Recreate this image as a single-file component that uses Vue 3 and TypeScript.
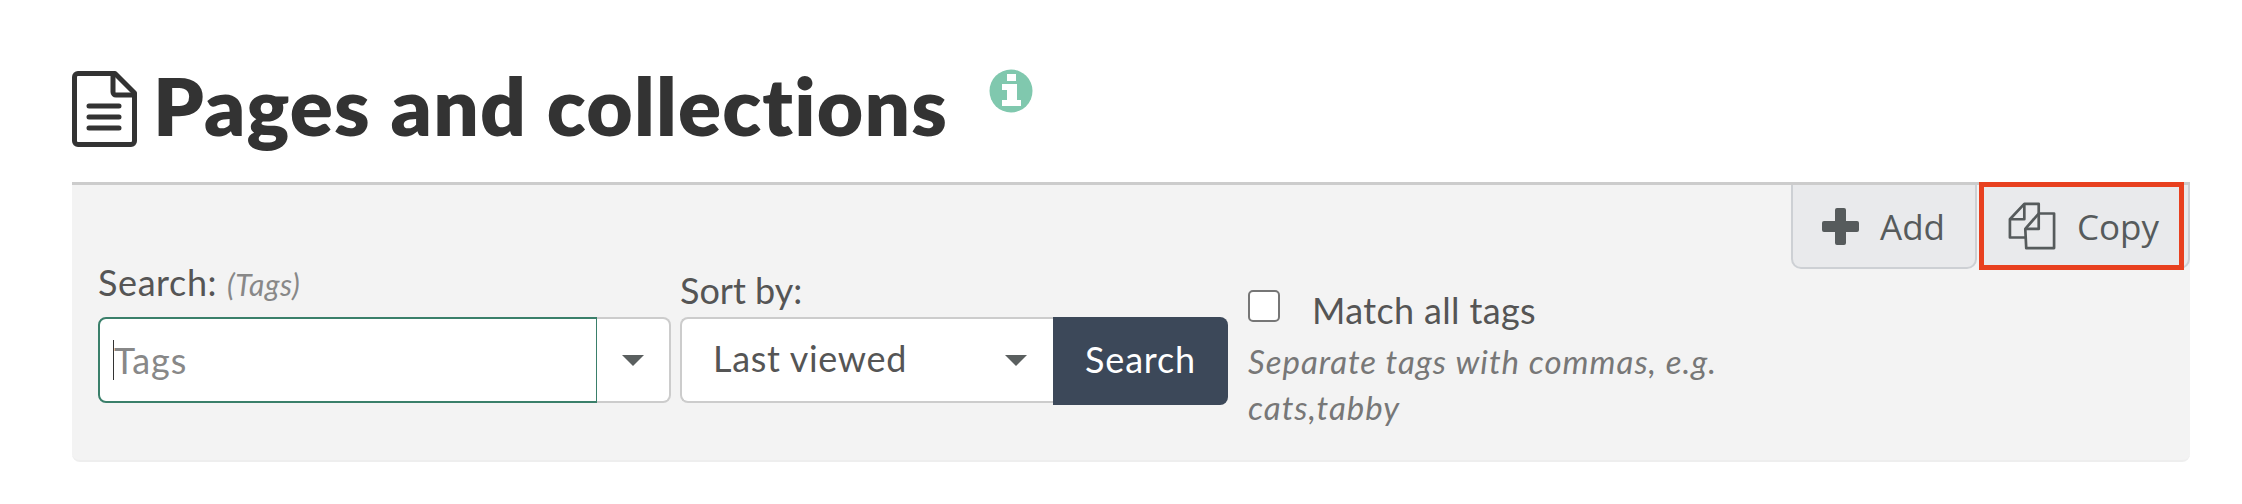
<script setup lang="ts">
const title = 'Pages and collections'
</script>

<template>
  <div class="page">
    <div class="heading">
      <svg class="doc" viewBox="0 0 65 76" fill="none" stroke="#333" stroke-width="5" stroke-linejoin="round" stroke-linecap="round">
        <path d="M6 2.5H43L62.5 22V70a3.5 3.5 0 0 1-3.5 3.5H6A3.5 3.5 0 0 1 2.5 70V6A3.5 3.5 0 0 1 6 2.5Z" />
        <path d="M41 3V21a3 3 0 0 0 3 3H62" />
        <path d="M17 35H47M17 46H47M17 57H47" />
      </svg>
      <h1>{{ title }}</h1>
      <svg class="info" viewBox="0 0 44 44">
        <circle cx="22" cy="22" r="21.5" fill="#80c8ae" />
        <path fill="#fff" d="M18 5h9v7h-9zM13 15h15v16h4v6H13v-6h5V21h-5z" />
      </svg>
    </div>
    <section class="panel">
      <div class="tabs">
        <button class="tab add">
          <svg class="plus" viewBox="0 0 37 37"><path fill="#565b5c" d="M13 2a2 2 0 0 1 2-2h7a2 2 0 0 1 2 2v11h11a2 2 0 0 1 2 2v7a2 2 0 0 1-2 2H24v11a2 2 0 0 1-2 2h-7a2 2 0 0 1-2-2V24H2a2 2 0 0 1-2-2v-7a2 2 0 0 1 2-2h11z" /></svg>
          <span>Add</span>
        </button>
        <button class="tab copy">
          <svg class="copyicon" viewBox="-1 -1 50 50" fill="none" stroke="#565b5c" stroke-width="2.8" stroke-linejoin="round">
            <path d="M17 36H1V17L16 1H31V11" />
            <path d="M16 1V17H1" />
            <path d="M17 27L31 11H47V47H18Z" />
            <path d="M31 11V27H17" />
          </svg>
          <span>Copy</span>
          <i class="highlight"></i>
        </button>
      </div>
      <div class="form">
        <div class="col search-col">
          <label class="lab">Search: <em>(Tags)</em></label>
          <div class="combo">
            <div class="tagsinput"><i class="caret"></i><span class="placeholder">Tags</span></div>
            <div class="drop"><i class="arrow"></i></div>
          </div>
        </div>
        <div class="col sort-col">
          <label class="lab sort-lab">Sort by:</label>
          <div class="sortgroup">
            <div class="select"><span>Last viewed</span><i class="arrow"></i></div>
            <button class="go">Search</button>
          </div>
        </div>
        <div class="col match">
          <div class="checkrow">
            <i class="box"></i>
            <span>Match all tags</span>
          </div>
          <p class="help">Separate tags with commas, e.g. cats,tabby</p>
        </div>
      </div>
    </section>
  </div>
</template>

<style>
html, body { margin: 0; background: #fff; }
</style>

<style scoped>
.page {
  width: 2242px;
  height: 504px;
  box-sizing: border-box;
  padding: 71px 52px 0 72px;
  font-family: Lato, "Liberation Sans", sans-serif;
  color: #555;
  overflow: hidden;
}
.heading { display: flex; align-items: flex-start; height: 111px; }
.doc { width: 65px; height: 76px; flex: none; }
h1 {
  margin: -6px 0 0 16px;
  font-size: 80px;
  line-height: 80px;
  font-weight: 800;
  color: #333;
  white-space: nowrap;
  letter-spacing: 1.2px;
}
.info { width: 44px; height: 44px; flex: none; margin: -2px 0 0 41px; }
.panel {
  height: 280px;
  box-sizing: border-box;
  background: #f3f3f3;
  border-top: 3px solid #ccc;
  border-bottom: 2px solid #eee;
  border-radius: 0 0 8px 8px;
}
.tabs { display: flex; justify-content: flex-end; gap: 2px; height: 84px; }
.tab {
  position: relative;
  display: flex;
  align-items: center;
  box-sizing: border-box;
  height: 84px;
  padding: 0;
  background: #e9eaec;
  border: 2px solid #cdd0d4;
  border-top: none;
  border-radius: 0 0 10px 10px;
  font-family: "Open Sans", sans-serif;
  font-size: 35px;
  color: #565b5c;
}
.add { width: 186px; padding-left: 29px; gap: 21px; }
.copy { width: 211px; padding-left: 27px; gap: 21px; border-radius: 0 0 10px 0; }
.plus { width: 37px; height: 37px; }
.copyicon { width: 48px; height: 48px; }
.highlight {
  position: absolute;
  left: -2px;
  right: 4px;
  top: -3px;
  bottom: -3px;
  border: 5px solid #e8401f;
}
.form { display: flex; align-items: flex-start; padding-left: 26px; margin-top: -5px; }
.col { display: flex; flex-direction: column; }
.lab { font-size: 36px; line-height: 36px; height: 53px; color: #555; letter-spacing: 0.6px; }
.lab em { font-size: 30px; color: #888; }
.search-col { width: 573px; margin-right: 9px; }
.sort-lab { padding-top: 8px; box-sizing: border-box; letter-spacing: 0; }
.sort-col { width: 548px; margin-right: 20px; }
.combo { display: flex; height: 86px; width: 573px; }
.tagsinput {
  display: flex;
  align-items: center;
  box-sizing: border-box;
  width: 499px;
  padding-left: 13px;
  background: #fff;
  border: 2px solid #3a7f6a;
  border-right-width: 1px;
  border-radius: 8px 0 0 8px;
}
.caret { width: 1px; height: 40px; background: #333; }
.placeholder { font-size: 36px; color: #888; letter-spacing: 1px; }
.drop {
  flex: 1;
  display: flex;
  align-items: center;
  justify-content: center;
  background: #fff;
  border: 2px solid #ccc;
  border-left: none;
  border-radius: 0 8px 8px 0;
}
.arrow {
  width: 0;
  height: 0;
  border-left: 11px solid transparent;
  border-right: 11px solid transparent;
  border-top: 11px solid #5a5f5f;
}
.sortgroup { display: flex; height: 86px; }
.select {
  flex: none;
  width: 373px;
  box-sizing: border-box;
  display: flex;
  align-items: center;
  justify-content: space-between;
  padding: 0 26px 0 31px;
  background: #fff;
  border: 2px solid #ccc;
  border-right: none;
  border-radius: 8px 0 0 8px;
  font-size: 36px;
  letter-spacing: 0.7px;
  color: #555;
}
.select span { margin-top: -5px; }
.go {
  flex: none;
  width: 175px;
  height: 88px;
  padding: 0 0 4px;
  background: #3c4859;
  border: none;
  border-radius: 0 8px 8px 0;
  color: #fff;
  font-family: inherit;
  font-size: 36px;
  letter-spacing: 0.8px;
}
.match { width: 490px; padding-top: 26px; }
.checkrow { display: flex; align-items: flex-start; font-size: 36px; line-height: 40px; letter-spacing: 0.35px; }
.box {
  flex: none;
  width: 32px;
  height: 32px;
  box-sizing: border-box;
  background: #fff;
  border: 2px solid #767676;
  border-radius: 5px;
  margin-right: 32px;
}
.help {
  margin: 8px 0 0;
  font-size: 33px;
  line-height: 46px;
  letter-spacing: 1px;
  font-style: italic;
  color: #777;
}
</style>
